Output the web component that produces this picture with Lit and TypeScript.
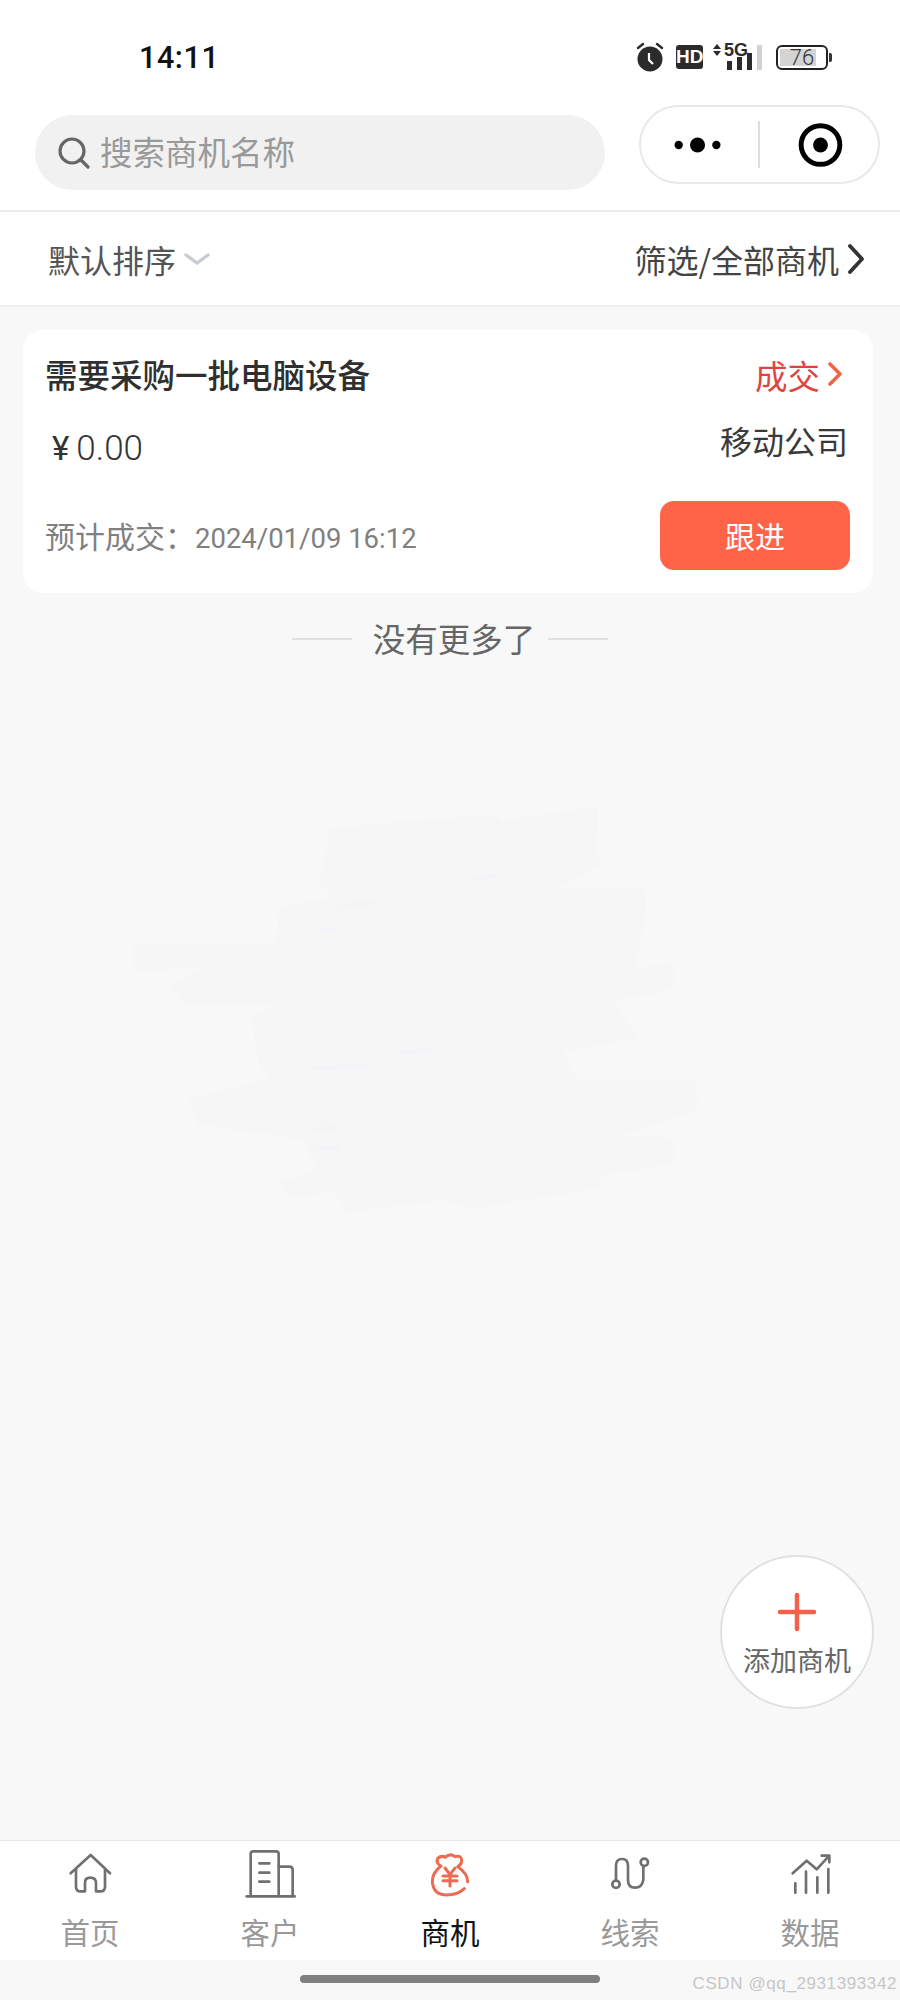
import { LitElement, html, css, svg } from 'lit';
import { customElement } from 'lit/decorators.js';

const tabs = [
  {
    label: '首页',
    box: '0 3 180 180',
    icon: svg`<path d="M32 100 92 45 150 100" /><path d="M48 88V140q0 14 14 14H75V128q0-15 16-15t17 15v26h13q14 0 14-14V88" />`,
  },
  {
    label: '客户',
    box: '720 63 180 180',
    icon: svg`<path d="M752 228V102q0-8 8-8h68q8 0 8 8V228" /><path d="M836 140h32q10 0 10 10V228" /><path d="M740 229H884" /><path d="M778 130h30M778 158h30M778 185h30" />`,
  },
  {
    label: '商机',
    box: '15 3 180 180',
    active: true,
    icon: svg`<path d="M148 146q-20 19-53 19-40 0-43-40 0-27 26-47-16-8-10-23 12-10 22-3 15-14 30-2 20-5 20 12 0 10-12 18 30 20 30 45" /><path d="M90 84l15 20 15-20M84 108h42M84 122h42M105 104v34" />`,
  },
  {
    label: '线索',
    box: '0 -12 180 180',
    icon: svg`<circle cx="48" cy="118" r="11" /><circle cx="133" cy="52" r="11" /><path d="M48 107V62q0-20 18-20t18 20v44q0 22 21 22t25-24V63" />`,
  },
  {
    label: '数据',
    box: '540 -12 180 180',
    icon: svg`<path d="M578 85 620 47 650 73 688 32M665 32h23v20" /><path d="M586 115v28M618 80v63M652 97v46M685 72v71" />`,
  },
];

@customElement('app-root')
export class AppRoot extends LitElement {
  static styles = css`
    :host {
      display: block;
      position: relative;
      height: 2000px;
      font-family: 'Noto Sans CJK SC', 'Roboto', sans-serif;
      color: #333;
      background: #fff;
    }

    .page {
      display: flex;
      flex-direction: column;
      height: 100%;
    }

    .status {
      display: flex;
      height: 105px;
      padding: 39px 0 0 139px;
      box-sizing: border-box;
    }

    .time {
      font: 500 30.5px/38px 'Roboto', sans-serif;
      letter-spacing: 0.6px;
      color: #111;
    }

    .status-icons {
      display: flex;
      align-items: flex-start;
      margin-left: auto;
      margin-right: 72px;
      margin-top: 3px;
    }

    .alarm {
      width: 28px;
      height: 30px;
    }

    .hd {
      width: 27px;
      height: 24px;
      margin: 3px 0 0 12px;
      background: #2b2b2b;
      border-radius: 3px;
      color: #fff;
      font: 700 19px/24px 'Liberation Sans Narrow', 'Liberation Sans', sans-serif;
      text-align: center;
    }

    .signal {
      position: relative;
      width: 50px;
      height: 28px;
      margin: 2px 0 0 9px;
    }

    .signal svg {
      display: block;
    }

    .five-g {
      position: absolute;
      left: 12px;
      top: -3px;
      font: 700 18px/18px 'Liberation Sans Narrow', 'Liberation Sans', sans-serif;
      color: #2b2b2b;
    }

    .battery {
      position: relative;
      width: 52px;
      height: 25px;
      margin: 3px 0 0 14px;
      border: 2px solid #222;
      border-radius: 6px;
      box-sizing: border-box;
      text-align: center;
      font: 300 22px/21px 'Roboto', sans-serif;
      color: #333;
      background: linear-gradient(90deg, #d4d4d4 36px, transparent 36px) 2px 2px / calc(100% - 4px) calc(100% - 4px) no-repeat;
    }

    .battery::after {
      content: '';
      position: absolute;
      right: -6px;
      top: 6px;
      width: 3px;
      height: 9px;
      background: #333;
      border-radius: 0 2px 2px 0;
    }

    .search-row {
      display: flex;
      align-items: flex-start;
      height: 107px;
      padding: 0 21px 0 35px;
      border-bottom: 2px solid #ececec;
      box-sizing: border-box;
    }

    .search {
      display: flex;
      align-items: center;
      gap: 9px;
      width: 570px;
      height: 75px;
      margin-top: 10px;
      padding-left: 22px;
      box-sizing: border-box;
      border-radius: 38px;
      background: #f1f1f1;
      color: #999;
      font-size: 32.5px;
    }

    .search span {
      padding-bottom: 5px;
    }

    .search svg {
      width: 34px;
      height: 34px;
    }

    .capsule {
      display: flex;
      align-items: center;
      width: 241px;
      height: 79px;
      margin-left: auto;
      margin-right: -1px;
      box-sizing: border-box;
      border: 2px solid #e9e9e9;
      border-radius: 40px;
    }

    .capsule svg {
      display: block;
    }

    .divider {
      width: 2px;
      height: 47px;
      background: #dedede;
    }

    .filter {
      display: flex;
      align-items: center;
      justify-content: space-between;
      height: 95px;
      padding: 1px 35px 0 48px;
      border-bottom: 2px solid #efefef;
      box-sizing: border-box;
      font-size: 32px;
      line-height: 40px;
    }

    .filter-left {
      display: flex;
      align-items: center;
      gap: 8px;
      color: #555;
    }

    .filter-right {
      display: flex;
      align-items: center;
      gap: 8px;
      color: #444;
    }

    main {
      flex: 1;
      padding-top: 23px;
      background: #f8f8f8;
      position: relative;
    }

    .smudge {
      position: absolute;
      left: 100px;
      top: 474px;
      width: 640px;
      height: 460px;
      pointer-events: none;
    }

    .card {
      position: relative;
      display: flex;
      flex-direction: column;
      margin: 0 27px 0 23px;
      padding: 0 23px;
      height: 263px;
      box-sizing: border-box;
      background: #fff;
      border-radius: 20px;
    }

    .row-top {
      display: flex;
      align-items: center;
      justify-content: space-between;
      height: 90px;
    }

    .title {
      margin-left: -1px;
      padding-bottom: 3px;
      font-size: 32.5px;
      font-weight: 500;
      color: #2f2f2f;
    }

    .stage {
      display: flex;
      align-items: center;
      gap: 8px;
      margin-right: 8px;
      padding-bottom: 2px;
      font-size: 32.5px;
      color: #dd4640;
    }

    .row-mid {
      display: flex;
      justify-content: space-between;
      height: 81px;
    }

    .price {
      margin: 8px 0 0 6px;
      font: 300 35px/42px 'Roboto', sans-serif;
      color: #333;
    }

    .yen {
      margin-right: 7px;
      font-size: 33px;
      font-weight: 400;
    }

    .company {
      margin-right: 2px;
      margin-top: -1px;
      font-size: 32px;
      line-height: 42px;
      color: #3a3a3a;
    }

    .row-bottom {
      display: flex;
      align-items: center;
      justify-content: space-between;
      height: 69px;
    }

    .eta {
      display: flex;
      align-items: baseline;
      margin-left: -1px;
      padding-bottom: 2px;
      font-size: 30px;
      color: #808080;
    }

    .eta span {
      font: 400 27.5px 'Roboto', sans-serif;
    }

    .follow {
      display: flex;
      align-items: center;
      justify-content: center;
      width: 190px;
      height: 69px;
      padding-bottom: 2px;
      box-sizing: border-box;
      background: #ff6348;
      border-radius: 14px;
      color: #fff;
      font-size: 30px;
    }

    .no-more {
      display: flex;
      align-items: center;
      justify-content: center;
      gap: 16px;
      height: 94px;
      font-size: 32.5px;
      color: #666;
    }

    .no-more span {
      margin: 0 -3px 0 5px;
      padding-bottom: 5px;
    }

    .no-more i {
      width: 60px;
      height: 2px;
      margin-bottom: 2px;
      background: #e0e0e0;
    }

    .fab {
      position: absolute;
      left: 720px;
      top: 1555px;
      display: flex;
      flex-direction: column;
      align-items: center;
      width: 154px;
      height: 154px;
      box-sizing: border-box;
      padding-top: 35px;
      border: 2px solid #dfe0e4;
      border-radius: 50%;
      background: #fff;
      color: #666;
      font-size: 27px;
      line-height: 38px;
    }

    .fab svg {
      width: 40px;
      height: 40px;
      margin-bottom: 9px;
    }

    .tabbar {
      display: grid;
      grid-template-columns: repeat(5, 1fr);
      height: 120px;
      border-top: 1px solid #e8e8e8;
      box-sizing: border-box;
      background: #fff;
    }

    .tab {
      display: flex;
      flex-direction: column;
      align-items: center;
      color: #999;
      font-size: 29.5px;
      line-height: 40px;
    }

    .tab.active {
      color: #111;
    }

    .tab svg {
      width: 60px;
      height: 60px;
      margin-bottom: 10px;
      fill: none;
      stroke: #707070;
      stroke-width: 8;
      stroke-linecap: round;
      stroke-linejoin: round;
    }

    .tab.active svg {
      stroke: #ee6a50;
      stroke-width: 9;
    }

    .home-bar {
      position: relative;
      display: flex;
      justify-content: center;
      height: 40px;
      padding-top: 15px;
      box-sizing: border-box;
      background: #f8f8f8;
    }

    .home-bar i {
      width: 300px;
      height: 8px;
      border-radius: 4px;
      background: #808080;
    }

    .mark {
      position: absolute;
      right: 3px;
      top: 13px;
      font: 400 17px/22px 'Liberation Sans', sans-serif;
      letter-spacing: 0.6px;
      color: #c6c6c6;
    }
  `;

  render() {
    return html`
      <div class="page">
        <div class="status">
          <div class="time">14:11</div>
          <div class="status-icons">
            <svg class="alarm" viewBox="0 0 28 30">
              <circle cx="14" cy="17" r="12.5" fill="#2b2b2b" />
              <path d="M2 6l5-4M26 6l-5-4" stroke="#2b2b2b" stroke-width="2.4" stroke-linecap="round" fill="none" />
              <path d="M13 11v7l4 4" stroke="#fff" stroke-width="2.2" fill="none" />
            </svg>
            <div class="hd">HD</div>
            <div class="signal">
              <svg width="50" height="28" viewBox="0 0 50 28">
                <path d="M1 5 5 0 9 5ZM1 7 5 12 9 7Z" fill="#2b2b2b" />
                <rect x="15" y="17" width="5" height="9" fill="#2b2b2b" />
                <rect x="25" y="13" width="5" height="13" fill="#2b2b2b" />
                <rect x="35" y="9" width="5" height="17" fill="#2b2b2b" />
                <rect x="45" y="1" width="5" height="25" fill="#d2d2d2" />
              </svg>
              <span class="five-g">5G</span>
            </div>
            <div class="battery">76</div>
          </div>
        </div>

        <div class="search-row">
          <div class="search">
            <svg viewBox="0 0 34 34" fill="none" stroke="#666" stroke-width="3.2" stroke-linecap="round">
              <circle cx="15" cy="15" r="12" />
              <path d="M24 24l7 7" />
            </svg>
            <span>搜索商机名称</span>
          </div>
          <div class="capsule">
            <svg width="118" height="40" viewBox="0 0 118 40">
              <circle cx="38" cy="20" r="4.2" />
              <circle cx="57" cy="20" r="7.6" />
              <circle cx="76" cy="20" r="4.2" />
            </svg>
            <div class="divider"></div>
            <svg width="119" height="50" viewBox="0 0 119 50">
              <circle cx="61" cy="25" r="19.5" fill="none" stroke="#000" stroke-width="5" />
              <circle cx="61" cy="25" r="7.5" />
            </svg>
          </div>
        </div>

        <div class="filter">
          <div class="filter-left">
            <span>默认排序</span>
            <svg width="26" height="12" viewBox="0 0 26 12" fill="none" stroke="#c9cbd3" stroke-width="3.4" stroke-linecap="round">
              <path d="M2 2l11 8 11-8" />
            </svg>
          </div>
          <div class="filter-right">
            <span>筛选/全部商机</span>
            <svg width="18" height="32" viewBox="0 0 18 32" fill="none" stroke="#333" stroke-width="3.8" stroke-linecap="round" stroke-linejoin="round">
              <path d="M3 3l12 13L3 29" />
            </svg>
          </div>
        </div>

        <main>
          <svg class="smudge" viewBox="0 0 1568 1380" preserveAspectRatio="none">
            <polygon fill="#f6f6f6" points="565,140 975,100 980,120 1220,75 1222,250 1130,320 1340,320 1335,430 1310,560 1405,545 1405,625 1260,660 1320,770 1135,810 1170,900 1460,900 1465,985 1280,1065 1405,1070 1405,1150 1230,1180 1225,1220 900,1285 850,1255 600,1295 575,1230 470,1255 440,1200 530,1170 500,1075 240,1030 215,955 420,890 390,860 370,710 430,670 215,675 170,620 250,560 85,570 85,490 430,490 440,380 570,350 535,300" />
            <path d="M590 375 670 365M540 450 580 440M905 295 965 285M520 860 650 855M520 1045 590 1040M520 1105 590 1100M740 815 810 805" stroke="#f2f4f7" stroke-width="12" fill="none" />
          </svg>

          <div class="card">
            <div class="row-top">
              <div class="title">需要采购一批电脑设备</div>
              <div class="stage">
                <span>成交</span>
                <svg width="14" height="24" viewBox="0 0 14 24" fill="none" stroke="#ee6644" stroke-width="3.6" stroke-linecap="round" stroke-linejoin="round">
                  <path d="M2 2l10 10L2 22" />
                </svg>
              </div>
            </div>
            <div class="row-mid">
              <div class="price"><span class="yen">¥</span>0.00</div>
              <div class="company">移动公司</div>
            </div>
            <div class="row-bottom">
              <div class="eta">预计成交：<span>2024/01/09 16:12</span></div>
              <div class="follow">跟进</div>
            </div>
          </div>

          <div class="no-more">
            <i></i>
            <span>没有更多了</span>
            <i></i>
          </div>
        </main>

        <div class="fab">
          <svg viewBox="0 0 40 40" fill="none" stroke="#f5604a" stroke-width="4.5" stroke-linecap="round">
            <path d="M20 3v34M3 20h34" />
          </svg>
          <span>添加商机</span>
        </div>

        <div class="tabbar">
          ${tabs.map(
            (t) => html`
              <div class="tab ${t.active ? 'active' : ''}">
                <svg viewBox="${t.box}">${t.icon}</svg>
                <span>${t.label}</span>
              </div>
            `
          )}
        </div>

        <div class="home-bar">
          <i></i>
          <div class="mark">CSDN @qq_2931393342</div>
        </div>
      </div>
    `;
  }
}
